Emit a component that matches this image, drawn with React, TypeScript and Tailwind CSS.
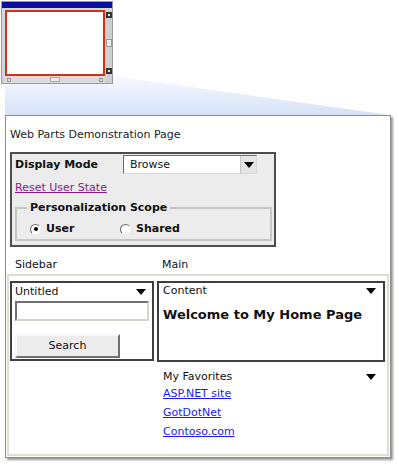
import React from "react"

const font = { fontFamily: '"DejaVu Sans", Verdana, sans-serif' }

function Arrow({ className = "" }: { className?: string }) {
  return (
    <svg width="10" height="6" viewBox="0 0 10 6" className={className}>
      <polygon points="0,0 10,0 5,6" fill="#000" />
    </svg>
  )
}

function Radio({ checked }: { checked?: boolean }) {
  return (
    <span className="w-[11px] h-[11px] rounded-full bg-white border border-t-[#6b6b6b] border-l-[#6b6b6b] border-r-[#f0f0f0] border-b-[#f0f0f0] flex items-center justify-center shrink-0">
      {checked && <span className="w-[4px] h-[4px] rounded-full bg-black" />}
    </span>
  )
}

function Thumbnail() {
  return (
    <div className="relative ml-px mt-px w-[112px] h-[83px] border border-[#9a9a9a] bg-[#d6d6d6] flex flex-col">
      <div className="h-[6px] bg-[#0b0f9e]" />
      <div className="flex pl-[3px] pt-[2px]">
        <div className="w-[100px] h-[66px] border-2 border-[#cc3414] bg-white" />
        <div className="w-[7px] h-[66px] bg-[#cfcfcf] flex flex-col items-center justify-between py-[2px]">
          <span className="w-[6px] h-[6px] bg-[#e6e6e6] border-2 border-[#333]" />
          <span className="w-[6px] h-[8px] bg-[#ececec] border border-[#999]" />
          <span className="w-[6px] h-[6px] bg-[#e6e6e6] border-2 border-[#333]" />
        </div>
      </div>
      <div className="flex pl-[3px]">
        <div className="w-[100px] h-[7px] bg-[#dcdcdc] flex items-center justify-between px-[2px]">
          <span className="w-[4px] h-[4px] border border-[#999]" />
          <span className="w-[10px] h-[5px] bg-[#ececec] border border-[#aaa]" />
          <span className="w-[4px] h-[4px] border border-[#999]" />
        </div>
        <div className="w-[7px] h-[7px] bg-[#d0d0d0]" />
      </div>
    </div>
  )
}

export default function App() {
  return (
    <div className="relative w-[399px] h-[468px] bg-white overflow-hidden text-[11px] text-[#111]" style={font}>
      <svg width="399" height="120" className="absolute left-0 top-0">
        <defs>
          <linearGradient id="zoom" x1="0" y1="0" x2="0" y2="1">
            <stop offset="0" stopColor="#f7f9fe" />
            <stop offset="1" stopColor="#d5e2f7" />
          </linearGradient>
        </defs>
        <polygon points="5,76 113,76 390,115 5,115" fill="url(#zoom)" />
      </svg>

      <Thumbnail />

      <div className="relative mt-[31px] ml-[5px] w-[386px] h-[343px] border border-[#8c8c8c] bg-white shadow-[2px_2px_2px_rgba(0,0,0,0.4)] flex flex-col">
        <div className="pl-[4px] pt-[12px] leading-[14px] text-[#222]">Web Parts Demonstration Page</div>

        {/* display mode panel */}
        <div className="ml-[4px] mt-[10px] w-[266px] h-[95px] border-2 border-[#4d4d4d] bg-[#ececec] pl-[3px] pr-[2px] pt-px flex flex-col">
          <div className="flex items-center">
            <span className="w-[108px] font-bold leading-[14px]">Display Mode</span>
            <div className="w-[134px] h-[19px] bg-white border border-t-[#6a6a6a] border-l-[#6a6a6a] border-r-[#d8d8d8] border-b-[#d8d8d8] flex items-center">
              <span className="flex-1 pl-[6px] leading-[14px]">Browse</span>
              <span className="w-[16px] h-full bg-[#e4e4e4] border-l border-[#c8c8c8] flex items-center justify-center">
                <Arrow />
              </span>
            </div>
          </div>
          <a className="mt-[7px] leading-[14px] text-[#8a1a8a] underline w-fit">Reset User State</a>
          <fieldset className="mt-[6px] border-2 border-[#c6c6c6] h-[40px] px-[10px]">
            <legend className="px-[3px] font-bold leading-[14px]">Personalization Scope</legend>
            <div className="flex items-center mt-[7px] ml-[3px] font-bold leading-[14px]">
              <span className="flex items-center gap-[5px] w-[90px]">
                <Radio checked />
                User
              </span>
              <span className="flex items-center gap-[5px]">
                <Radio />
                Shared
              </span>
            </div>
          </fieldset>
        </div>

        {/* zone headers */}
        <div className="ml-[4px] mt-[11px] grid grid-cols-[144px_228px] gap-[4px] leading-[14px]">
          <span className="pl-[5px]">Sidebar</span>
          <span className="pl-[4px]">Main</span>
        </div>

        {/* zone */}
        <div className="mx-px mt-[2px] flex-1 mb-px border-2 border-[#dedfd4] pt-[5px] pl-px grid grid-cols-[144px_228px] gap-[3px] items-start">
          <div className="h-[80px] border-2 border-[#3f3f3f] pt-[2px] px-[3px] flex flex-col">
            <div className="flex items-center justify-between leading-[14px] pr-[3px]">
              <span>Untitled</span>
              <Arrow />
            </div>
            <div className="mt-[2px] h-[20px] w-[134px] border-2 border-t-[#707070] border-l-[#707070] border-r-[#d6d6ce] border-b-[#d6d6ce] bg-white" />
            <button className="mt-[13px] w-[105px] h-[24px] bg-[#ececec] border-2 border-t-[#f8f8f8] border-l-[#f8f8f8] border-r-[#707070] border-b-[#707070] text-[11px] leading-[14px]">
              Search
            </button>
          </div>

          <div className="flex flex-col">
            <div className="h-[81px] border-2 border-[#3f3f3f] pt-px px-[4px] flex flex-col">
              <div className="flex items-center justify-between leading-[14px] pr-[3px]">
                <span>Content</span>
                <Arrow />
              </div>
              <div className="mt-[9px] text-[13px] font-bold leading-[16px]">Welcome to My Home Page</div>
            </div>
            <div className="mt-[8px] px-[6px] flex flex-col">
              <div className="flex items-center justify-between leading-[14px] pr-[3px]">
                <span>My Favorites</span>
                <Arrow />
              </div>
              <a className="leading-[19px] h-[19px] text-[#1c1cf0] underline w-fit">ASP.NET site</a>
              <a className="leading-[19px] h-[19px] text-[#1c1cf0] underline w-fit">GotDotNet</a>
              <a className="leading-[19px] h-[19px] text-[#1c1cf0] underline w-fit">Contoso.com</a>
            </div>
          </div>
        </div>
      </div>
    </div>
  )
}
